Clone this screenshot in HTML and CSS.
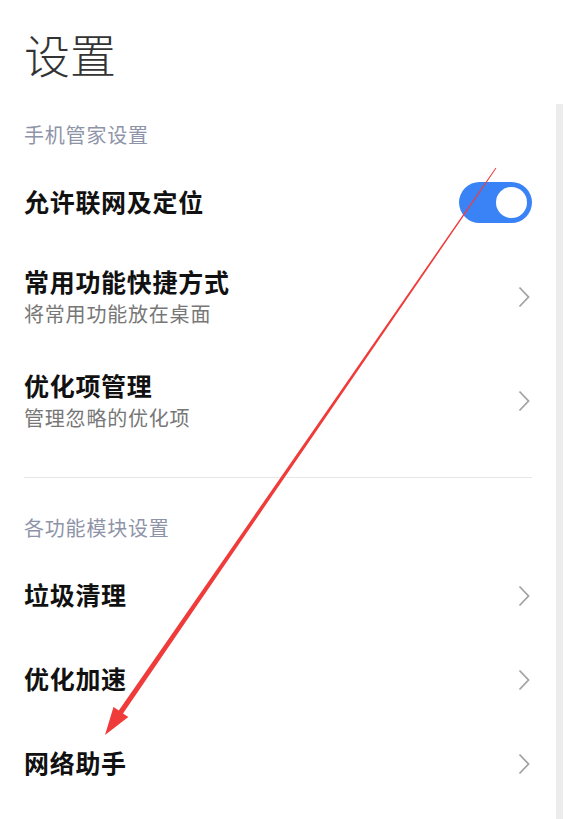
FILE: index.html
```html
<!DOCTYPE html>
<html lang="zh-CN">
<head>
    <meta charset="UTF-8">
    <meta name="viewport" content="width=device-width, initial-scale=1.0">
    <title>设置</title>
    <link rel="stylesheet" href="styles.css">
</head>
<body>
    <div class="screen">
        <div class="content">
            <h1 class="title">设置</h1>

            <!-- 手机管家设置 -->
            <div class="section-label">手机管家设置</div>

            <div class="row">
                <div class="row-text">
                    <div class="row-title">允许联网及定位</div>
                </div>
                <div class="switch on"><span class="knob"></span></div>
            </div>

            <div class="row tall">
                <div class="row-text">
                    <div class="row-title">常用功能快捷方式</div>
                    <div class="row-sub">将常用功能放在桌面</div>
                </div>
                <svg class="chevron" width="12" height="22" viewBox="0 0 12 22"><polyline points="1.5,1.5 10.5,11 1.5,20.5" fill="none" stroke="#a3a3a3" stroke-width="1.8"/></svg>
            </div>

            <div class="row tall">
                <div class="row-text">
                    <div class="row-title">优化项管理</div>
                    <div class="row-sub">管理忽略的优化项</div>
                </div>
                <svg class="chevron" width="12" height="22" viewBox="0 0 12 22"><polyline points="1.5,1.5 10.5,11 1.5,20.5" fill="none" stroke="#a3a3a3" stroke-width="1.8"/></svg>
            </div>

            <div class="divider"></div>

            <!-- 各功能模块设置 -->
            <div class="section-label">各功能模块设置</div>

            <div class="row">
                <div class="row-title">垃圾清理</div>
                <svg class="chevron" width="12" height="22" viewBox="0 0 12 22"><polyline points="1.5,1.5 10.5,11 1.5,20.5" fill="none" stroke="#a3a3a3" stroke-width="1.8"/></svg>
            </div>

            <div class="row">
                <div class="row-title">优化加速</div>
                <svg class="chevron" width="12" height="22" viewBox="0 0 12 22"><polyline points="1.5,1.5 10.5,11 1.5,20.5" fill="none" stroke="#a3a3a3" stroke-width="1.8"/></svg>
            </div>

            <div class="row">
                <div class="row-title">网络助手</div>
                <svg class="chevron" width="12" height="22" viewBox="0 0 12 22"><polyline points="1.5,1.5 10.5,11 1.5,20.5" fill="none" stroke="#a3a3a3" stroke-width="1.8"/></svg>
            </div>
        </div>
        <div class="scrollbar"></div>
    </div>

    <!-- annotation arrow drawn over the screenshot -->
    <svg class="annotation" width="566" height="819" viewBox="0 0 566 819">
        <polygon points="495.6,167.7 496.4,168.3 123,713.4 128.3,717.1 105,735 113.5,706.9 118.8,710.6" fill="#f03b3b"/>
    </svg>
</body>
</html>
```

FILE: styles.css
```css
* {
    box-sizing: border-box;
    margin: 0;
    padding: 0;
}

body {
    background: #ffffff;
    font-family: "Noto Sans CJK SC", "Noto Sans", sans-serif;
    color: #111111;
}

.screen {
    display: flex;
    min-height: 100vh;
}

.content {
    flex: 1;
    padding: 25px 24px 0 24px;
}

.title {
    font-size: 46px;
    line-height: 56px;
    font-weight: 300;
    color: #333333;
    margin-bottom: 28px;
}

.section-label {
    height: 52px;
    line-height: 52px;
    font-size: 20px;
    letter-spacing: 0.8px;
    color: #8e94a8;
}

.row {
    height: 84px;
    padding-bottom: 4px;
    display: flex;
    align-items: center;
    justify-content: space-between;
}

.row.tall {
    height: 104px;
    padding-bottom: 0;
}

.row-title {
    font-size: 25px;
    line-height: 30px;
    letter-spacing: 0.7px;
    font-weight: 700;
    color: #111111;
}

.row-sub {
    font-size: 20px;
    line-height: 30px;
    letter-spacing: 0.8px;
    margin-top: 3px;
    color: #777777;
}

.chevron {
    margin-right: 2px;
}

.row .chevron {
    margin-top: 4px;
}

.row.tall .chevron {
    margin-top: 0;
}

.switch {
    width: 73px;
    height: 41px;
    border-radius: 21px;
    background: #d9d9d9;
    padding: 5px;
    display: flex;
}

.switch.on {
    background: #3a83f6;
    justify-content: flex-end;
    margin-top: 2px;
}

.knob {
    width: 31px;
    height: 31px;
    border-radius: 50%;
    background: #ffffff;
}

.divider {
    height: 1px;
    background: #e6e6e6;
    margin: 24px 0;
}

.scrollbar {
    width: 7px;
    margin: 104px 3px 0 0;
    background: #ececec;
}

.annotation {
    position: absolute;
    left: 0;
    top: 0;
    pointer-events: none;
}
```
